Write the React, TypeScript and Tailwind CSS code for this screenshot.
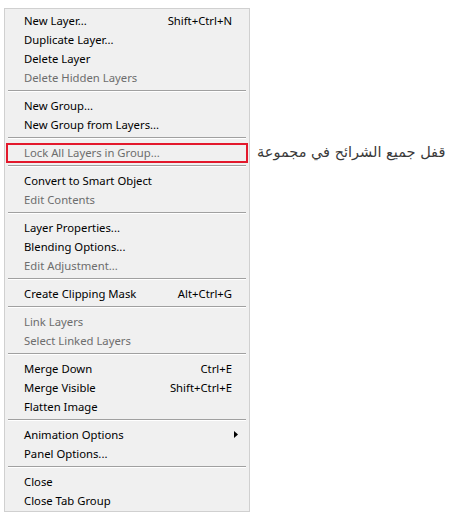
type Entry =
  | { kind: "item"; label: string; shortcut?: string; disabled?: boolean; submenu?: boolean; marked?: boolean }
  | { kind: "sep" };

const entries: Entry[] = [
  { kind: "item", label: "New Layer...", shortcut: "Shift+Ctrl+N" },
  { kind: "item", label: "Duplicate Layer..." },
  { kind: "item", label: "Delete Layer" },
  { kind: "item", label: "Delete Hidden Layers", disabled: true },
  { kind: "sep" },
  { kind: "item", label: "New Group..." },
  { kind: "item", label: "New Group from Layers..." },
  { kind: "sep" },
  { kind: "item", label: "Lock All Layers in Group...", disabled: true, marked: true },
  { kind: "sep" },
  { kind: "item", label: "Convert to Smart Object" },
  { kind: "item", label: "Edit Contents", disabled: true },
  { kind: "sep" },
  { kind: "item", label: "Layer Properties..." },
  { kind: "item", label: "Blending Options..." },
  { kind: "item", label: "Edit Adjustment...", disabled: true },
  { kind: "sep" },
  { kind: "item", label: "Create Clipping Mask", shortcut: "Alt+Ctrl+G" },
  { kind: "sep" },
  { kind: "item", label: "Link Layers", disabled: true },
  { kind: "item", label: "Select Linked Layers", disabled: true },
  { kind: "sep" },
  { kind: "item", label: "Merge Down", shortcut: "Ctrl+E" },
  { kind: "item", label: "Merge Visible", shortcut: "Shift+Ctrl+E" },
  { kind: "item", label: "Flatten Image" },
  { kind: "sep" },
  { kind: "item", label: "Animation Options", submenu: true },
  { kind: "item", label: "Panel Options..." },
  { kind: "sep" },
  { kind: "item", label: "Close" },
  { kind: "item", label: "Close Tab Group" },
];

function Separator() {
  return (
    <div className="h-[9px] pt-[3px] pl-[1px] pr-[1px]">
      <div className="h-px bg-[#a0a0a0]" />
      <div className="h-px bg-white" />
    </div>
  );
}

function MenuItem({ entry }: { entry: Extract<Entry, { kind: "item" }> }) {
  return (
    <div
      className={`relative flex items-center justify-between h-[19px] pl-[17px] pr-[15px] ${
        entry.disabled ? "text-[#6d6d6d]" : "text-black"
      }`}
    >
      <span>{entry.label}</span>
      {entry.shortcut && <span>{entry.shortcut}</span>}
      {entry.submenu && (
        <svg className="absolute right-[9px] top-[6px]" width="4" height="7" viewBox="0 0 4 7">
          <path d="M0 0 L4 3.5 L0 7 Z" fill="#000" />
        </svg>
      )}
      {entry.marked && (
        <>
          {/* red highlight frame around the item */}
          <div className="absolute left-[-1px] right-[-1px] top-0 bottom-[-1px] border-2 border-[#e3192c]" />
          {/* arabic callout */}
          <div
            dir="rtl"
            className="absolute left-[250px] top-0 whitespace-nowrap font-['DejaVu_Sans',sans-serif] text-[14.5px] leading-[19px] text-[#3a3a3a]"
          >
            قفل جميع الشرائح في مجموعة
          </div>
        </>
      )}
    </div>
  );
}

export default function App() {
  return (
    <div className="w-[472px] h-[522px] bg-white pt-[8px] pl-[4px]">
      <div className="w-[246px] h-[504px] bg-[#f0f0f0] border border-[#d0d0d0] pt-[2px] pb-[1px] px-[2px] font-['Noto_Sans',sans-serif] text-[11.3px] leading-[19px]">
        {entries.map((e, i) =>
          e.kind === "sep" ? <Separator key={i} /> : <MenuItem key={i} entry={e} />
        )}
      </div>
    </div>
  );
}
